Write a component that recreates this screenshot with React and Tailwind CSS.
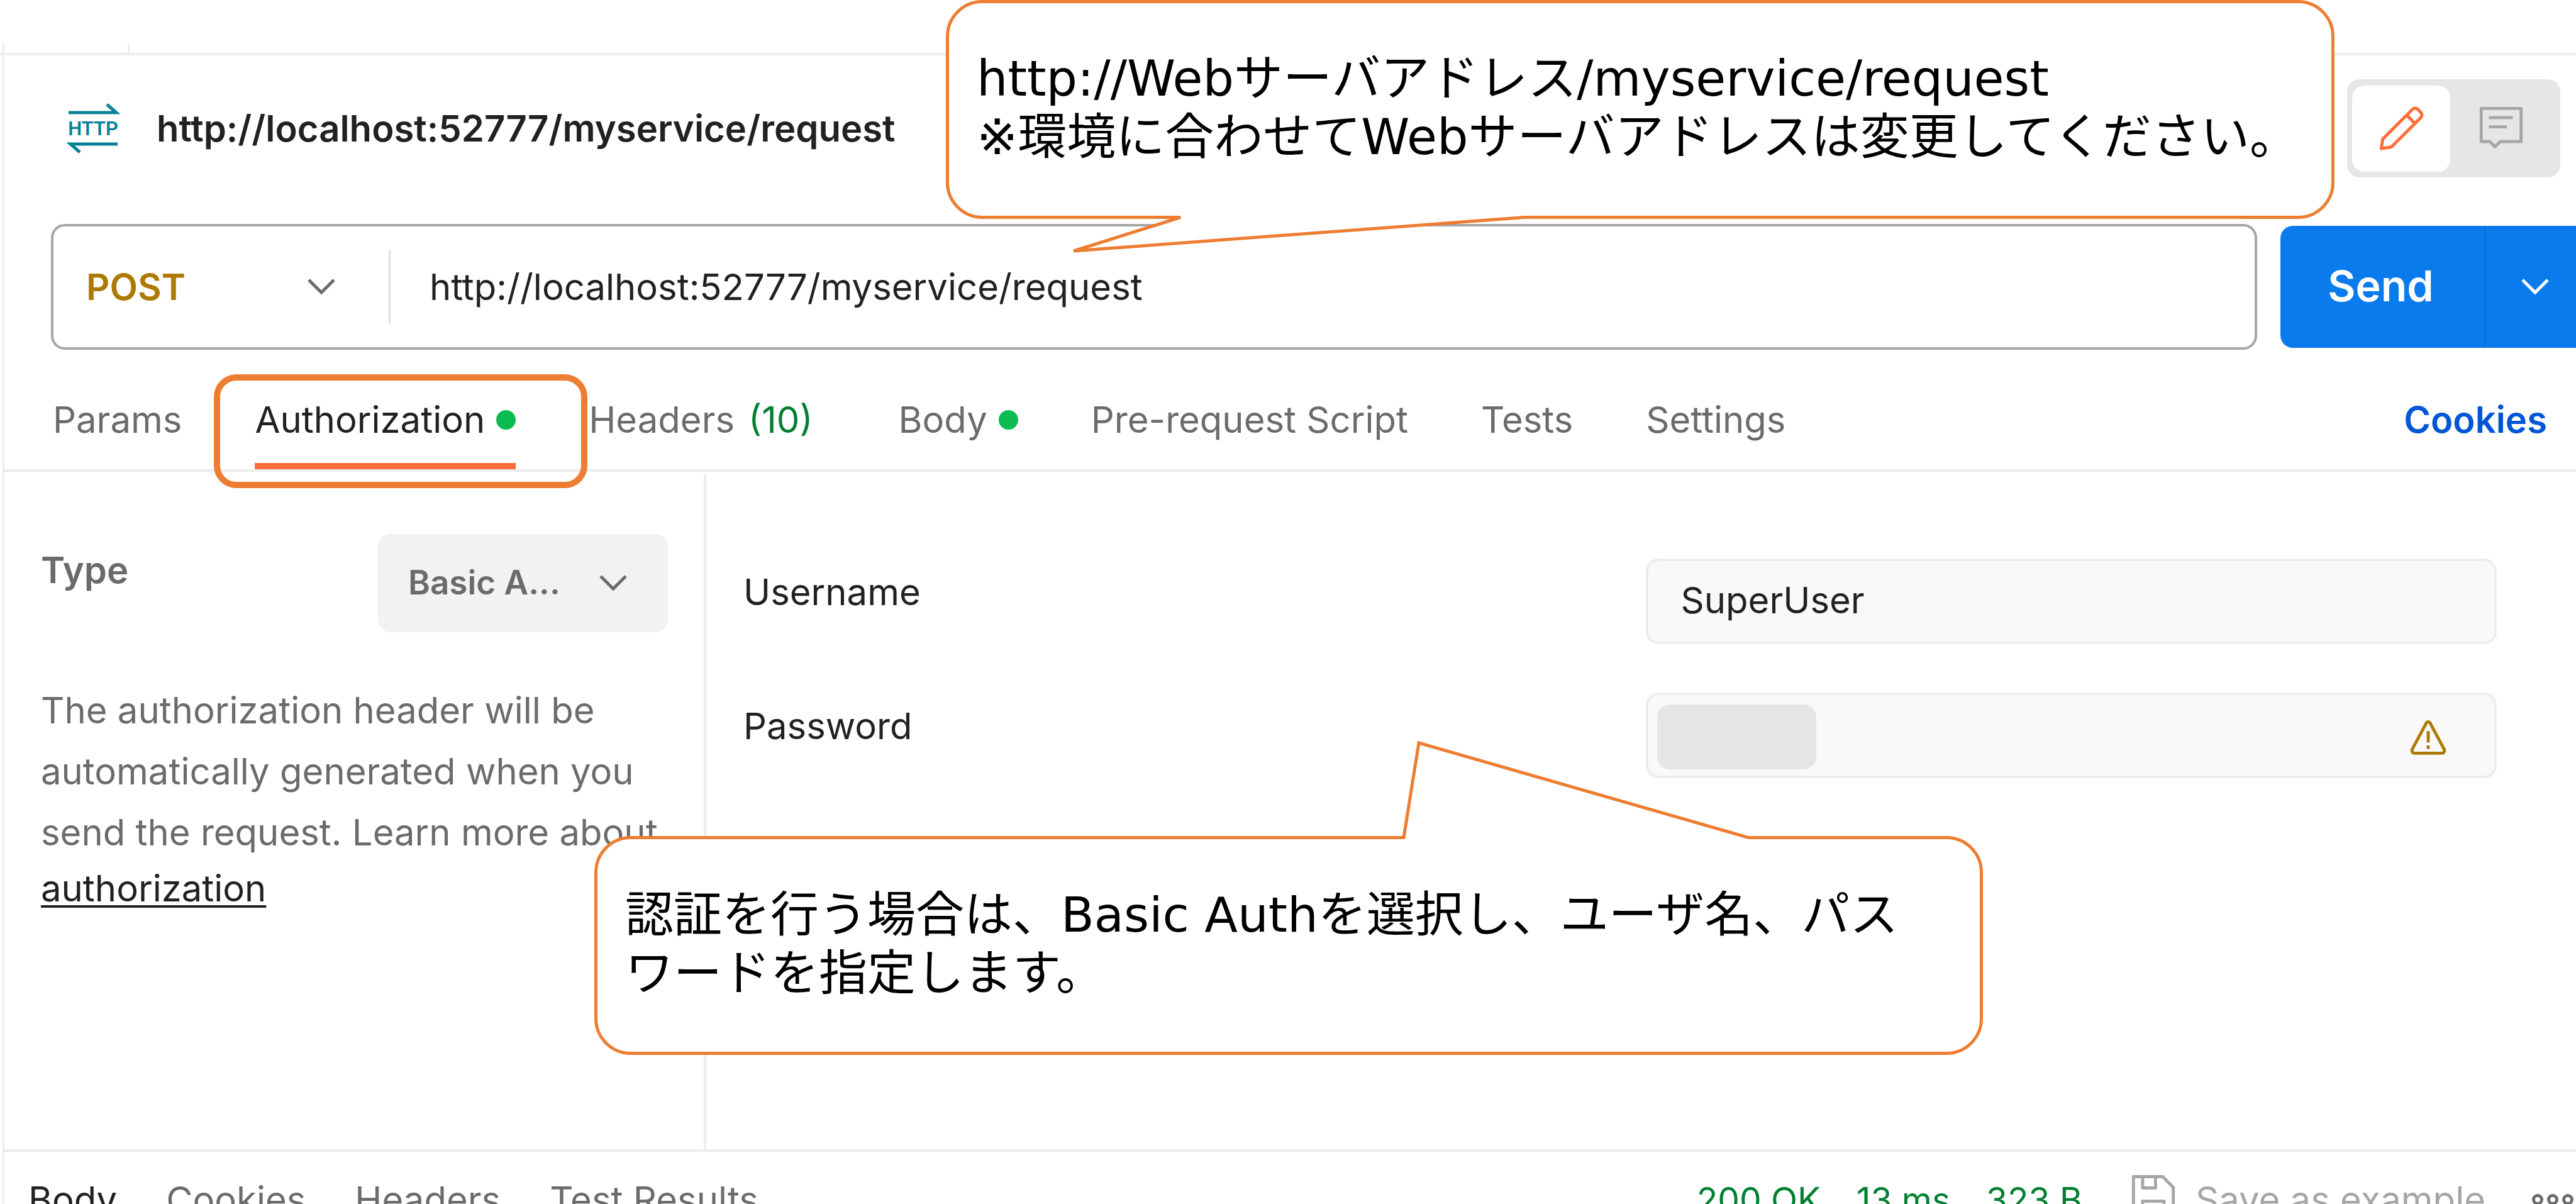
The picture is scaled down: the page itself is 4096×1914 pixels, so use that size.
const strokeProps = {
  fill: "none",
  stroke: "currentColor",
  strokeWidth: 1,
  strokeLinejoin: "round",
};

function HttpIcon() {
  return (
    <svg viewBox="0 0 78 78" className="h-[78px] w-[78px] shrink-0 overflow-visible text-[#058296]" role="img" aria-label="HTTP">
      <path d="M0 14H76L61 1" fill="none" stroke="currentColor" strokeWidth="5" />
      <path d="M78 64H3L18 77" fill="none" stroke="currentColor" strokeWidth="5" />
      <text
        x="39"
        y="50"
        textAnchor="middle"
        fill="currentColor"
        className="font-['Roboto',sans-serif] text-[31px] font-semibold"
      >
        HTTP
      </text>
    </svg>
  );
}

function PencilIcon() {
  return (
    <svg viewBox="0 0 16 16" className="h-[78px] w-[78px] text-[#ff6c37]" {...strokeProps}>
      <path d="M1.5 14.6L2 11.5L11.7 1.8a1.2 1.2 0 0 1 1.7 0l1 1a1.2 1.2 0 0 1 0 1.7L4.8 14.1Z" />
      <path d="M9.8 3.7L12.5 6.4" />
    </svg>
  );
}

function CommentIcon() {
  return (
    <svg viewBox="0 0 16 16" className="h-[78px] w-[78px] text-[#a6a6a6]" {...strokeProps}>
      <path d="M1.5 1.5H14.5V12.3H7.7L6 14L4.3 12.3H1.5Z" />
      <path d="M4 4.5H11.8M4 7.5H9.9" />
    </svg>
  );
}

function SaveIcon() {
  return (
    <svg viewBox="0 0 16 16" className="h-[78px] w-[78px] text-[#a6a6a6]" {...strokeProps}>
      <path d="M1.5 .5H11L14.5 4V15.5H1.5Z" />
      <path d="M4.5 .5V4.2H8.7V.5" />
      <path d="M4.5 15.5V8.5H11.5V15.5" />
    </svg>
  );
}

function MoreIcon() {
  return (
    <svg viewBox="0 0 66 20" className="h-[20px] w-[66px] text-[#6b6b6b]" fill="none" stroke="currentColor" strokeWidth="5">
      <circle cx="9" cy="10" r="6.5" />
      <circle cx="33" cy="10" r="6.5" />
      <circle cx="57" cy="10" r="6.5" />
    </svg>
  );
}

function WarningIcon() {
  return (
    <svg viewBox="0 0 24 24" className="h-[58px] w-[58px] text-[#ad7a03]" fill="none" stroke="currentColor" strokeWidth="2">
      <path d="M10.8 2.1a1.4 1.4 0 0 1 2.4 0l9.3 17.4a1.8 1.8 0 0 1-1.5 2.6H3a1.8 1.8 0 0 1-1.5-2.6z" />
      <path d="M12 7.5V15M12 17V19.2" />
    </svg>
  );
}

function Chevron({ className }) {
  return (
    <svg viewBox="0 0 44 28" className={className} fill="none" stroke="currentColor" strokeWidth="5">
      <path d="M2 3L22 23L42 3" />
    </svg>
  );
}

function Dot() {
  return <span className="ml-[18px] h-[31px] w-[31px] rounded-full bg-[#0cbb52]" />;
}

function Tab({ children, active, className = "" }) {
  return (
    <button
      type="button"
      role="tab"
      aria-selected={!!active}
      className={
        "flex items-center border-b-[10px] pt-[76px] pb-[34px] leading-[70px] whitespace-nowrap " +
        (active ? "border-[#ff6c37] text-[#212121] " : "border-transparent text-[#6b6b6b] ") +
        className
      }
    >
      {children}
    </button>
  );
}

function Callout({ className, lines, children }) {
  return (
    <div
      className={
        "absolute h-[348px] w-[2208px] rounded-[58px] border-[5px] border-[#ed7d31] bg-white pt-[74px] pl-[44px] font-['DejaVu_Sans','Noto_Sans_CJK_JP',sans-serif] leading-[93px] text-black " +
        className
      }
    >
      {lines.map((line) => (
        <p key={line} className="whitespace-nowrap">
          {line}
        </p>
      ))}
      {children}
    </div>
  );
}

export default function App() {
  return (
    <div className="relative flex h-screen w-full flex-col overflow-hidden bg-white pt-[69px] font-['Inter',sans-serif] text-[58px] text-[#212121]">
      <div className="flex h-[19px] shrink-0 border-b-4 border-[#ededed] pl-[4px]">
        <div className="w-[202px] border-x-[3px] border-[#ededed]" />
      </div>

      <div className="ml-[4px] flex min-h-0 flex-1 flex-col border-l-[3px] border-[#ededed]">
        <header className="flex shrink-0 items-center pt-[38px] pr-[25px] pb-[74px] pl-[102px]">
          <HttpIcon />
          <h1 className="ml-[62px] font-semibold whitespace-nowrap">http://localhost:52777/myservice/request</h1>
          <div className="ml-auto flex h-[156px] w-[339px] items-center rounded-[20px] bg-[#e6e6e6] pl-[8px]">
            <button type="button" aria-label="Edit" className="flex h-[137px] w-[156px] items-center justify-center rounded-[20px] bg-white">
              <PencilIcon />
            </button>
            <button type="button" aria-label="Comments" className="flex h-[137px] w-[162px] items-center justify-center">
              <CommentIcon />
            </button>
          </div>
        </header>

        <form className="flex shrink-0 items-center pl-[74px]" onSubmit={(e) => e.preventDefault()}>
          <div className="flex h-[200px] flex-1 items-center rounded-[22px] border-4 border-[#a6a6a6]">
            <div className="relative flex h-[118px] w-[536px] items-center border-r-[3px] border-[#e0e0e0]">
              <select aria-label="Method" className="h-full w-full appearance-none bg-transparent pl-[52px] font-semibold text-[#ad7a03] outline-none">
                <option>POST</option>
              </select>
              <Chevron className="pointer-events-none absolute right-[85px] h-[28px] w-[44px] text-[#6b6b6b]" />
            </div>
            <input
              aria-label="Request URL"
              className="h-full min-w-0 flex-1 bg-transparent pl-[62px] outline-none"
              defaultValue="http://localhost:52777/myservice/request"
            />
          </div>
          <div className="ml-[37px] flex h-[194px] w-[470px] overflow-hidden rounded-l-[20px] bg-[#097bed] text-white">
            <button type="submit" className="flex-1 border-r-4 border-[#0872e0] pr-[4px] pb-[4px] text-[68px] font-semibold">
              Send
            </button>
            <button type="button" aria-label="Send options" className="flex w-[143px] items-center pl-[56px]">
              <Chevron className="h-[28px] w-[44px]" />
            </button>
          </div>
        </form>

        <nav className="flex shrink-0 items-start border-b-4 border-[#ededed] pr-[46px] pl-[77px]">
          <div role="tablist" className="flex gap-[116px]">
            <Tab>Params</Tab>
            <Tab active>
              Authorization
              <Dot />
            </Tab>
            <Tab className="mr-[20px]">
              Headers <span className="ml-[22px] text-[#007f31]">(10)</span>
            </Tab>
            <Tab>
              Body
              <Dot />
            </Tab>
            <Tab>Pre-request Script</Tab>
            <Tab>Tests</Tab>
            <Tab>Settings</Tab>
          </div>
          <a href="#cookies" className="ml-auto pt-[76px] leading-[70px] font-semibold text-[#0056d6]">
            Cookies
          </a>
        </nav>

        <main className="flex min-h-0 flex-1">
          <section className="mt-[4px] w-[1116px] shrink-0 border-r-4 border-[#ededed] pt-[95px] pr-[57px] pl-[58px]">
            <div className="flex items-start justify-between">
              <label htmlFor="auth-type" className="leading-[114px] font-semibold text-[#6b6b6b]">
                Type
              </label>
              <div className="relative flex h-[156px] w-[461px] items-center rounded-[20px] bg-[#f2f2f2]">
                <select
                  id="auth-type"
                  className="h-full w-full appearance-none bg-transparent pl-[48px] text-[53px] font-semibold text-[#6b6b6b] outline-none"
                >
                  <option>Basic A...</option>
                </select>
                <Chevron className="pointer-events-none absolute right-[65px] h-[28px] w-[44px] text-[#6b6b6b]" />
              </div>
            </div>
            <p className="mt-[76px] leading-[97px] text-[#6b6b6b]">
              The authorization header will be automatically generated when you send the request. Learn more about
            </p>
            <a href="#authorization" className="block w-fit leading-[80px] underline decoration-4 underline-offset-6">
              authorization
            </a>
          </section>

          <section className="flex flex-1 flex-col gap-[77px] pt-[138px] pr-[126px] pl-[59px]">
            <div className="grid grid-cols-[53fr_50fr]">
              <label htmlFor="username" className="leading-[106px]">
                Username
              </label>
              <input
                id="username"
                defaultValue="SuperUser"
                className="h-[136px] w-full rounded-[20px] border-4 border-[#ededed] bg-[#f9f9f9] pb-[4px] pl-[52px] outline-none"
              />
            </div>
            <div className="grid grid-cols-[53fr_50fr]">
              <label htmlFor="password" className="leading-[106px]">
                Password
              </label>
              <div className="relative flex items-center">
                <input
                  id="password"
                  type="password"
                  className="h-[136px] w-full rounded-[20px] border-4 border-[#ededed] bg-[#f9f9f9] pb-[4px] pl-[52px] outline-none"
                />
                <span className="absolute top-[19px] left-[18px] h-[103px] w-[253px] rounded-[20px] bg-[#e5e5e5]" />
                <span className="absolute top-[43px] right-[80px]">
                  <WarningIcon />
                </span>
              </div>
            </div>
          </section>
        </main>

        <footer className="h-[87px] shrink-0 overflow-hidden border-t-4 border-[#ededed]">
          <div className="flex h-[152px] items-center pr-[4px] pl-[38px] whitespace-nowrap text-[#6b6b6b]">
            <div role="tablist" className="flex gap-[78px]">
              <button type="button" role="tab" aria-selected="true" className="text-[#212121]">
                Body
              </button>
              <button type="button" role="tab">Cookies</button>
              <button type="button" role="tab">Headers</button>
              <button type="button" role="tab">Test Results</button>
            </div>
            <div className="ml-auto flex gap-[57px] text-[55px] text-[#007f31]">
              <span>200 OK</span>
              <span>13 ms</span>
              <span>323 B</span>
            </div>
            <button type="button" className="ml-[74px] flex items-center gap-[28px] text-[#a6a6a6]">
              <SaveIcon />
              Save as example
            </button>
            <button type="button" aria-label="More" className="ml-[74px]">
              <MoreIcon />
            </button>
          </div>
        </footer>
      </div>

      <div className="absolute top-[595px] left-[340px] h-[181px] w-[594px] rounded-[36px] border-[10px] border-[#ed7d31]" />

      <Callout
        className="top-0 left-[1504px] text-[78px]"
        lines={["http://Webサーバアドレス/myservice/request", "※環境に合わせてWebサーバアドレスは変更してください。"]}
      >
        <svg viewBox="0 0 740 68" className="absolute top-[330px] left-[185px] h-[68px] w-[740px]" fill="white">
          <path d="M180 0V10.500L12 64L730 10.500V0Z" />
          <path d="M170 10.500H183L13 64L730 10.500H740" stroke="#ed7d31" strokeWidth="5" fill="none" />
        </svg>
      </Callout>

      <Callout
        className="top-[1329px] left-[945px] text-[77px]"
        lines={["認証を行う場合は、Basic Authを選択し、ユーザ名、パス", "ワードを指定します。"]}
      >
        <svg viewBox="0 0 570 165" className="absolute -top-[157px] left-[1270px] h-[165px] w-[570px]" fill="white">
          <path d="M12 165V152L36 4L560 154V165Z" />
          <path d="M0 154.500H12L36 4L560 154.500H570" stroke="#ed7d31" strokeWidth="5" fill="none" />
        </svg>
      </Callout>
    </div>
  );
}
